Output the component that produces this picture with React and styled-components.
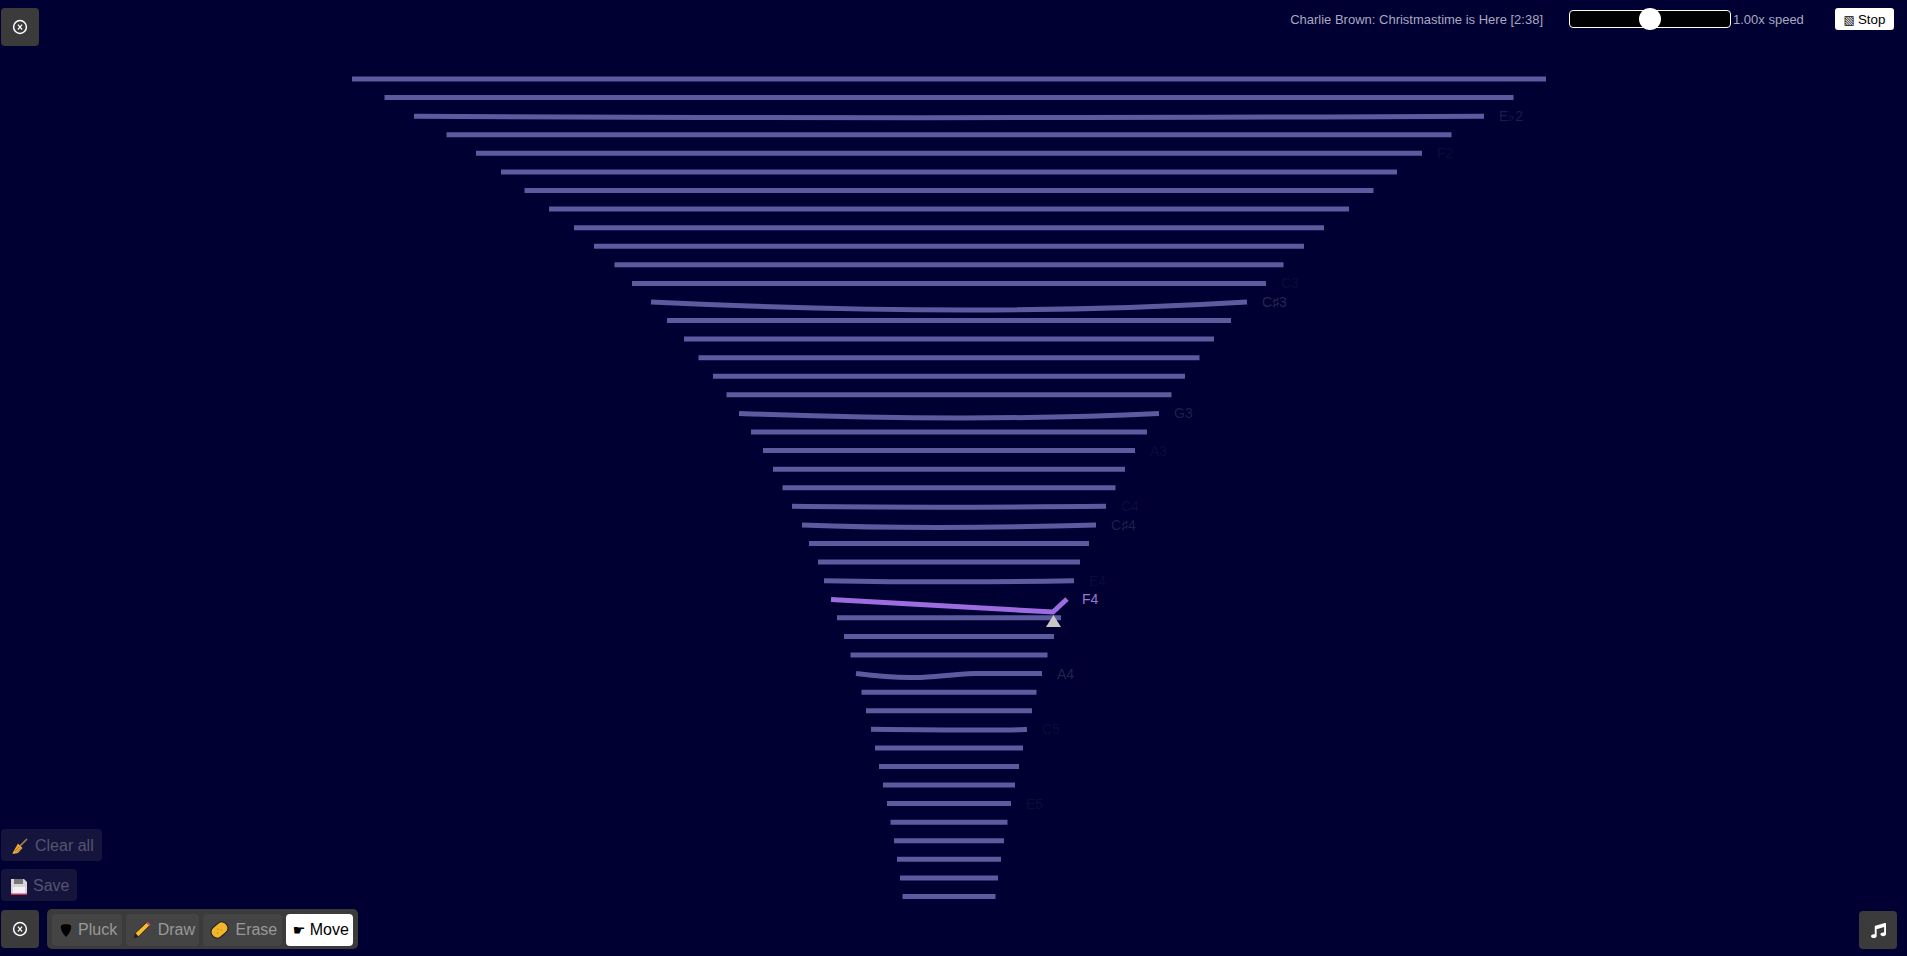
import React, { useState } from 'react'
import styled, { createGlobalStyle } from 'styled-components'
import { FaMusic } from 'react-icons/fa'

const GlobalStyle = createGlobalStyle`
    html, body {
        margin: 0;
        height: 100%;
        overflow: hidden;
        background: #000032;
        font-family: "Liberation Sans", Arial, sans-serif;
    }
`

const CENTER = 949
const TOP = 79
const GAP = 18.58

// half width of every string, lowest note first
const HALVES = [
    597, 564.5, 535, 502.5, 473, 448, 424.5, 400, 375, 355, 334.5, 317, 298, 282, 265, 250.5,
    236, 222.5, 210, 198, 186, 176, 166.5, 157, 147, 140, 131, 125, 118, 112, 105, 98.5, 93,
    87.5, 83, 78, 74, 70, 66, 62, 58.5, 55, 52, 49, 46.5,
]

// bent strings: depth in px, position of the lowest point from 0 to 1
const BENDS = {
    2: { depth: 1.5, at: 0.45 },
    12: { depth: 8, at: 0.56 },
    18: { depth: 4.5, at: 0.56 },
    23: { depth: 0.8, at: 0.4 },
    24: { depth: 2.5, at: 0.42 },
    27: { depth: 1.2, at: 0.55 },
    35: { depth: 0.8, at: 0.9 },
}

const LABELS = {
    2: { name: 'E♭2', alpha: 0.16 },
    4: { name: 'F2', alpha: 0.08 },
    11: { name: 'C3', alpha: 0.08 },
    12: { name: 'C♯3', alpha: 0.22 },
    18: { name: 'G3', alpha: 0.18 },
    20: { name: 'A3', alpha: 0.08 },
    23: { name: 'C4', alpha: 0.09 },
    24: { name: 'C♯4', alpha: 0.18 },
    27: { name: 'E4', alpha: 0.08 },
    32: { name: 'A4', alpha: 0.2 },
    35: { name: 'C5', alpha: 0.08 },
    39: { name: 'E5', alpha: 0.08 },
}

const PLUCKED = 28
const A4 = 32

const Page = styled.div`
    display: grid;
    width: 100vw;
    height: 100vh;
    overflow: hidden;
    color: #fff;
`

const Harp = styled.svg`
    grid-area: 1 / 1;
    width: 100%;
    height: 100%;
`

const Str = styled.path`
    fill: none;
    stroke: ${p => (p.$plucked ? '#9c6ce0' : '#5c5b9f')};
    stroke-width: 5;
`

const Note = styled.text`
    font-size: 14px;
    font-family: "Liberation Sans", Arial, sans-serif;
    fill: ${p => p.$color};
`

const Overlay = styled.div`
    grid-area: 1 / 1;
    display: flex;
    flex-direction: column;
    justify-content: space-between;
    padding: 8px 10px 7px 1px;
    min-height: 0;
`

const TopRow = styled.div`
    display: flex;
    justify-content: space-between;
    align-items: flex-start;
`

const Playback = styled.div`
    display: flex;
    align-items: center;
    height: 22px;
    padding-right: 3px;
    font-size: 13px;
    color: #a9a9c0;
`

const Title = styled.span`
    margin-right: 26px;
`

const Speed = styled.input`
    appearance: none;
    -webkit-appearance: none;
    box-sizing: border-box;
    width: 162px;
    height: 18px;
    margin: 0 2px 0 0;
    background: #000;
    border: 1px solid #fff;
    border-radius: 4px;
    outline: none;

    &::-webkit-slider-thumb {
        -webkit-appearance: none;
        width: 22px;
        height: 22px;
        border-radius: 50%;
        background: #fff;
    }
`

const SpeedLabel = styled.span`
    width: 102px;
`

const StopButton = styled.button`
    height: 22px;
    width: 59px;
    padding: 0;
    border: 0;
    border-radius: 3px;
    background: #fff;
    color: #000;
    font-family: inherit;
    font-size: 13.33px;
`

const IconButton = styled.button`
    display: flex;
    align-items: center;
    justify-content: center;
    width: 38px;
    height: 38px;
    padding: 0;
    border: 0;
    border-radius: 4px;
    background: #3b3b3b;
    color: #fff;
`

const BottomRow = styled.div`
    display: flex;
    justify-content: space-between;
    align-items: flex-end;
`

const LeftStack = styled.div`
    display: flex;
    flex-direction: column;
    align-items: flex-start;
    gap: 8px;
`

const GhostButton = styled.button`
    display: flex;
    align-items: center;
    gap: 6px;
    box-sizing: border-box;
    height: 32px;
    padding: 2px 8px 0 10px;
    border: 0;
    border-radius: 4px;
    background: #14143d;
    color: #55556f;
    font-family: inherit;
    font-size: 16px;
`

const ToolRow = styled.div`
    display: flex;
    align-items: center;
    gap: 8px;
`

const Toolbar = styled.div`
    display: flex;
    gap: 4px;
    padding: 5px;
    height: 40px;
    box-sizing: border-box;
    border-radius: 5px;
    background: #3b3b3b;
`

const ToolButton = styled.button`
    display: flex;
    align-items: center;
    gap: 5px;
    height: 32px;
    padding: 0 4.5px 0 7px;
    border: 0;
    border-radius: 4px;
    background: ${p => (p.$active ? '#fff' : '#444')};
    color: ${p => (p.$active ? '#000' : '#999')};
    font-family: inherit;
    font-size: 16px;
`

const HandGlyph = styled.span`
    width: 12px;
    font-family: "DejaVu Sans", sans-serif;
    font-size: 14px;
`

const StopGlyph = styled.span`
    font-family: "DejaVu Sans", sans-serif;
    font-size: 12px;
    margin-right: 3px;
`

const CloseIcon = () => (
    <svg width="16" height="16" viewBox="0 0 16 16" fill="none" stroke="#fff">
        <circle cx="8" cy="8" r="6.4" strokeWidth="1.5" />
        <path d="M5.9 5.7L10.1 10.5M10.1 5.7L5.9 10.5" strokeWidth="1.2" />
    </svg>
)

const Broom = () => (
    <svg width="18" height="18" viewBox="0 0 18 18">
        <path d="M9 9L16 2" stroke="#a8824a" strokeWidth="1.6" />
        <path d="M7 6.5L11.5 11L7 16L2 17L1.5 16Z" fill="#e8a73a" />
        <path d="M4 14L8 10M6 15L9.5 11.5" stroke="#9a6a20" strokeWidth="0.8" />
    </svg>
)

const Floppy = () => (
    <svg width="16" height="17" viewBox="0 0 16 17">
        <path d="M0 1h13l3 3v13H0z" fill="#d8d4dc" />
        <rect x="3" y="1" width="9" height="5" fill="#777" />
        <rect x="2" y="9" width="12" height="7" fill="#f4f0f4" />
        <rect x="0" y="15.5" width="16" height="1.5" fill="#c03060" />
    </svg>
)

const Pick = () => (
    <svg width="14" height="15" viewBox="0 0 14 15">
        <path d="M2 2.5C4 .8 10 .8 12 2.5C13 6 10 11 7 14C4 11 1 6 2 2.5Z" fill="#000" />
    </svg>
)

const Pencil = () => (
    <svg width="20" height="18" viewBox="0 0 20 18">
        <path d="M1 17L2.4 12L13.6 1.4L16.8 4.4L5.6 15.6Z" fill="#f5b92e" stroke="#1a1a1a" strokeWidth="0.8" />
        <path d="M13 2L16.2 5L17.4 3.6L15 1Z" fill="#d84a5a" />
        <path d="M1 17L2.4 12L5.6 15.6Z" fill="#222" />
    </svg>
)

const Sponge = () => (
    <svg width="20" height="20" viewBox="0 0 20 20">
        <rect x="0.5" y="4" width="18" height="12" rx="5.5" transform="rotate(-40 9.5 10)" fill="#f2b62c" stroke="#1c1c1c" strokeWidth="1" />
        <circle cx="8" cy="9" r="0.8" fill="#c98a14" />
        <circle cx="11.5" cy="10" r="0.8" fill="#c98a14" />
        <circle cx="7.5" cy="13" r="0.8" fill="#c98a14" />
    </svg>
)

const stringPath = (half, y, bend) => {
    const l = CENTER - half
    const r = CENTER + half
    if (!bend) return `M${l} ${y}L${r} ${y}`
    const cx = l + (r - l) * bend.at
    return `M${l} ${y}Q${cx} ${y + bend.depth * 2} ${r} ${y}`
}

const HarpStrings = () => (
    <Harp viewBox="0 0 1907 956" preserveAspectRatio="none">
        {HALVES.map((half, i) => {
            const y = TOP + i * GAP
            if (i === PLUCKED) return null
            if (i === A4) {
                return (
                    <Str
                        key={i}
                        d={`M${CENTER - half} ${y}C880 ${y + 3} 895 ${y + 4.5} 915 ${y + 4}S950 ${y + 1} 975 ${y}L${CENTER + half} ${y}`}
                    />
                )
            }
            return <Str key={i} d={stringPath(half, y, BENDS[i])} />
        })}
        {Object.entries(LABELS).map(([i, { name, alpha }]) => (
            <Note
                key={i}
                x={CENTER + HALVES[i] + 15}
                y={TOP + i * GAP + 5}
                $color={`rgba(190, 190, 200, ${alpha})`}
            >
                {name}
            </Note>
        ))}
        <Str $plucked d="M831 599.5L1053 612L1067 599" />
        <Note x={1082} y={604} $color="#9a78d0">F4</Note>
        <path d="M1053.5 615L1061 627H1046Z" fill="#c9c6c6" />
    </Harp>
)

const App = () => {
    const [speed, setSpeed] = useState(1)

    return (
        <Page>
            <GlobalStyle />
            <HarpStrings />
            <Overlay>
                <TopRow>
                    <IconButton><CloseIcon /></IconButton>
                    <Playback>
                        <Title>Charlie Brown: Christmastime is Here [2:38]</Title>
                        <Speed
                            type="range"
                            min="0"
                            max="2"
                            step="0.01"
                            value={speed}
                            onChange={e => setSpeed(Number(e.target.value))}
                        />
                        <SpeedLabel>{speed.toFixed(2)}x speed</SpeedLabel>
                        <StopButton><StopGlyph>▧</StopGlyph>Stop</StopButton>
                    </Playback>
                </TopRow>
                <BottomRow>
                    <LeftStack>
                        <GhostButton><Broom />Clear all</GhostButton>
                        <GhostButton><Floppy />Save</GhostButton>
                        <ToolRow>
                            <IconButton><CloseIcon /></IconButton>
                            <Toolbar>
                                <ToolButton><Pick />Pluck</ToolButton>
                                <ToolButton><Pencil />Draw</ToolButton>
                                <ToolButton><Sponge />Erase</ToolButton>
                                <ToolButton $active><HandGlyph>☛</HandGlyph>Move</ToolButton>
                            </Toolbar>
                        </ToolRow>
                    </LeftStack>
                    <IconButton><FaMusic size={15} /></IconButton>
                </BottomRow>
            </Overlay>
        </Page>
    )
}

export default App
